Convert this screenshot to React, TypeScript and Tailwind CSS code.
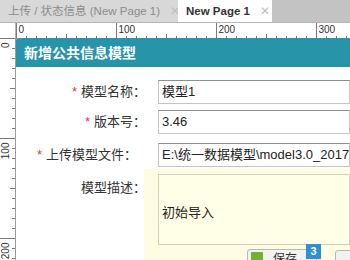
import React from "react";

const FONT = "font-['Liberation_Sans','Noto_Sans_CJK_SC',sans-serif]";

function HRuler() {
  const ticks = [];
  for (let i = 0; i <= 33; i++) {
    const x = i * 10 + 0.5;
    const major = i % 10 === 0;
    const mid = i % 5 === 0;
    const h = major ? 16 : mid ? 5 : 3;
    ticks.push(<line key={i} x1={x} x2={x} y1={16 - h} y2={16} stroke="#7a7a7a" strokeWidth={1} />);
    if (major)
      ticks.push(
        <text key={"t" + i} x={x + 2} y={10} fontSize={10} fill="#333" fontFamily="Liberation Sans, Arial, sans-serif">
          {i * 10}
        </text>
      );
  }
  return (
    <svg width={334} height={16} className="block">
      {ticks}
    </svg>
  );
}

function VRuler() {
  const ticks = [];
  for (let i = 0; i <= 22; i++) {
    const y = i * 10 + 0.5;
    const major = i % 10 === 0;
    const mid = i % 5 === 0;
    const w = major ? 15 : mid ? 5 : 3;
    ticks.push(<line key={i} x1={15 - w} x2={15} y1={y} y2={y} stroke="#7a7a7a" strokeWidth={1} />);
    if (major)
      ticks.push(
        <text
          key={"t" + i}
          x={9}
          y={y + 4}
          fontSize={10}
          fill="#333"
          textAnchor="end"
          transform={`rotate(-90 9 ${y + 4})`}
          fontFamily="Liberation Sans, Arial, sans-serif"
        >
          {i * 10}
        </text>
      );
  }
  return (
    <svg width={16} height={222} className="block shrink-0">
      <line x1={15.5} x2={15.5} y1={0} y2={222} stroke="#9a9a9a" />
      {ticks}
    </svg>
  );
}

function Label({ text, req, pr = 4 }: { text: string; req?: boolean; pr?: number }) {
  return (
    <div
      className="w-[134px] shrink-0 text-right text-[13px] text-[#333] leading-[24px] whitespace-nowrap"
      style={{ paddingRight: pr }}
    >
      {req && <span className="text-[#e0393e] mr-[4px]">*</span>}
      {text}
    </div>
  );
}

function Input({ value }: { value: string }) {
  return (
    <div className="ml-[8px] flex-1 min-w-0 h-[24px] border border-[#c4c4c4] border-t-[#8e8e8e] bg-white pl-[3px] text-[13px] leading-[22px] text-[#222] whitespace-nowrap overflow-hidden">
      {value}
    </div>
  );
}

export default function App() {
  return (
    <div className={`w-[350px] h-[260px] overflow-hidden bg-white ${FONT}`}>
      {/* tab bar */}
      <div className="flex h-[22px] bg-[#c3c3c3] text-[11.5px] leading-[22px] whitespace-nowrap">
        <div className="w-[178px] bg-[#d8d8d8] pl-[8px] text-[#8c8c8c] flex">
          <span>上传 / 状态信息 (New Page 1)</span>
          <span className="ml-[10px] text-[#c0c0c0]">✕</span>
        </div>
        <div className="w-[94px] bg-white pl-[8px] text-[#333] font-bold flex">
          <span>New Page 1</span>
          <span className="ml-[10px] text-[#c0c0c0] font-normal">✕</span>
        </div>
      </div>
      {/* top ruler */}
      <div className="flex h-[16px] bg-white border-t border-[#b5b5b5]">
        <div className="w-[16px] shrink-0 border-r border-[#b5b5b5]" />
        <HRuler />
      </div>
      {/* body */}
      <div className="flex">
        <VRuler />
        <div className="flex-1 min-w-0 flex flex-col">
          <div className="h-[29px] bg-[#2894a9] rounded-tl-[3px] pl-[8px] text-white font-bold text-[14px] leading-[29px] font-['Noto_Sans_CJK_SC',sans-serif]">
            新增公共信息模型
          </div>
          <div className="flex mt-[13px]">
            <Label text="模型名称：" req />
            <Input value="模型1" />
          </div>
          <div className="flex mt-[6px]">
            <Label text="版本号：" req />
            <Input value="3.46" />
          </div>
          <div className="flex mt-[9px]">
            <Label text="上传模型文件：" req pr={13} />
            <Input value="E:\统一数据模型\model3.0_20170" />
          </div>
          <div className="flex mt-[2px]">
            <div className="w-[134px] -mr-[6px] shrink-0 relative z-10 text-right text-[13px] text-[#333] leading-[24px] pt-[7px] pr-[4px]">
              模型描述：
            </div>
            <div className="flex-1 min-w-0 bg-[#fefde2] pl-[14px] pt-[5px] h-[92px] overflow-hidden">
              <div className="h-[71px] border border-[#d0d0c0] bg-[#fffee6] pl-[3px] pt-[28px] text-[13px] leading-[20px] text-[#222] whitespace-nowrap">
                初始导入
              </div>
              <div className="flex mt-[4px] ml-[89px]">
                <div className="relative shrink-0 w-[70px] h-[20px] rounded-[3px] border border-[#b8b8b8] bg-[#f2f2f2] flex items-start pl-[3px] pt-[2px]">
                  <div className="w-[12px] h-[12px] bg-[#6eb32c] rounded-[1px]" />
                  <span className="ml-[10px] text-[12px] leading-[14px] text-[#333]">保存</span>
                  <div className="absolute -top-[6px] right-[-5px] w-[15px] h-[15px] bg-[#2d8fd4] text-white text-[11px] leading-[15px] text-center font-bold">
                    3
                  </div>
                </div>
                <div className="shrink-0 ml-[18px] w-[40px] h-[20px] mt-[1px] rounded-[3px] border border-[#b8b8b8] bg-[#f2f2f2]" />
              </div>
            </div>
          </div>
        </div>
      </div>
    </div>
  );
}
